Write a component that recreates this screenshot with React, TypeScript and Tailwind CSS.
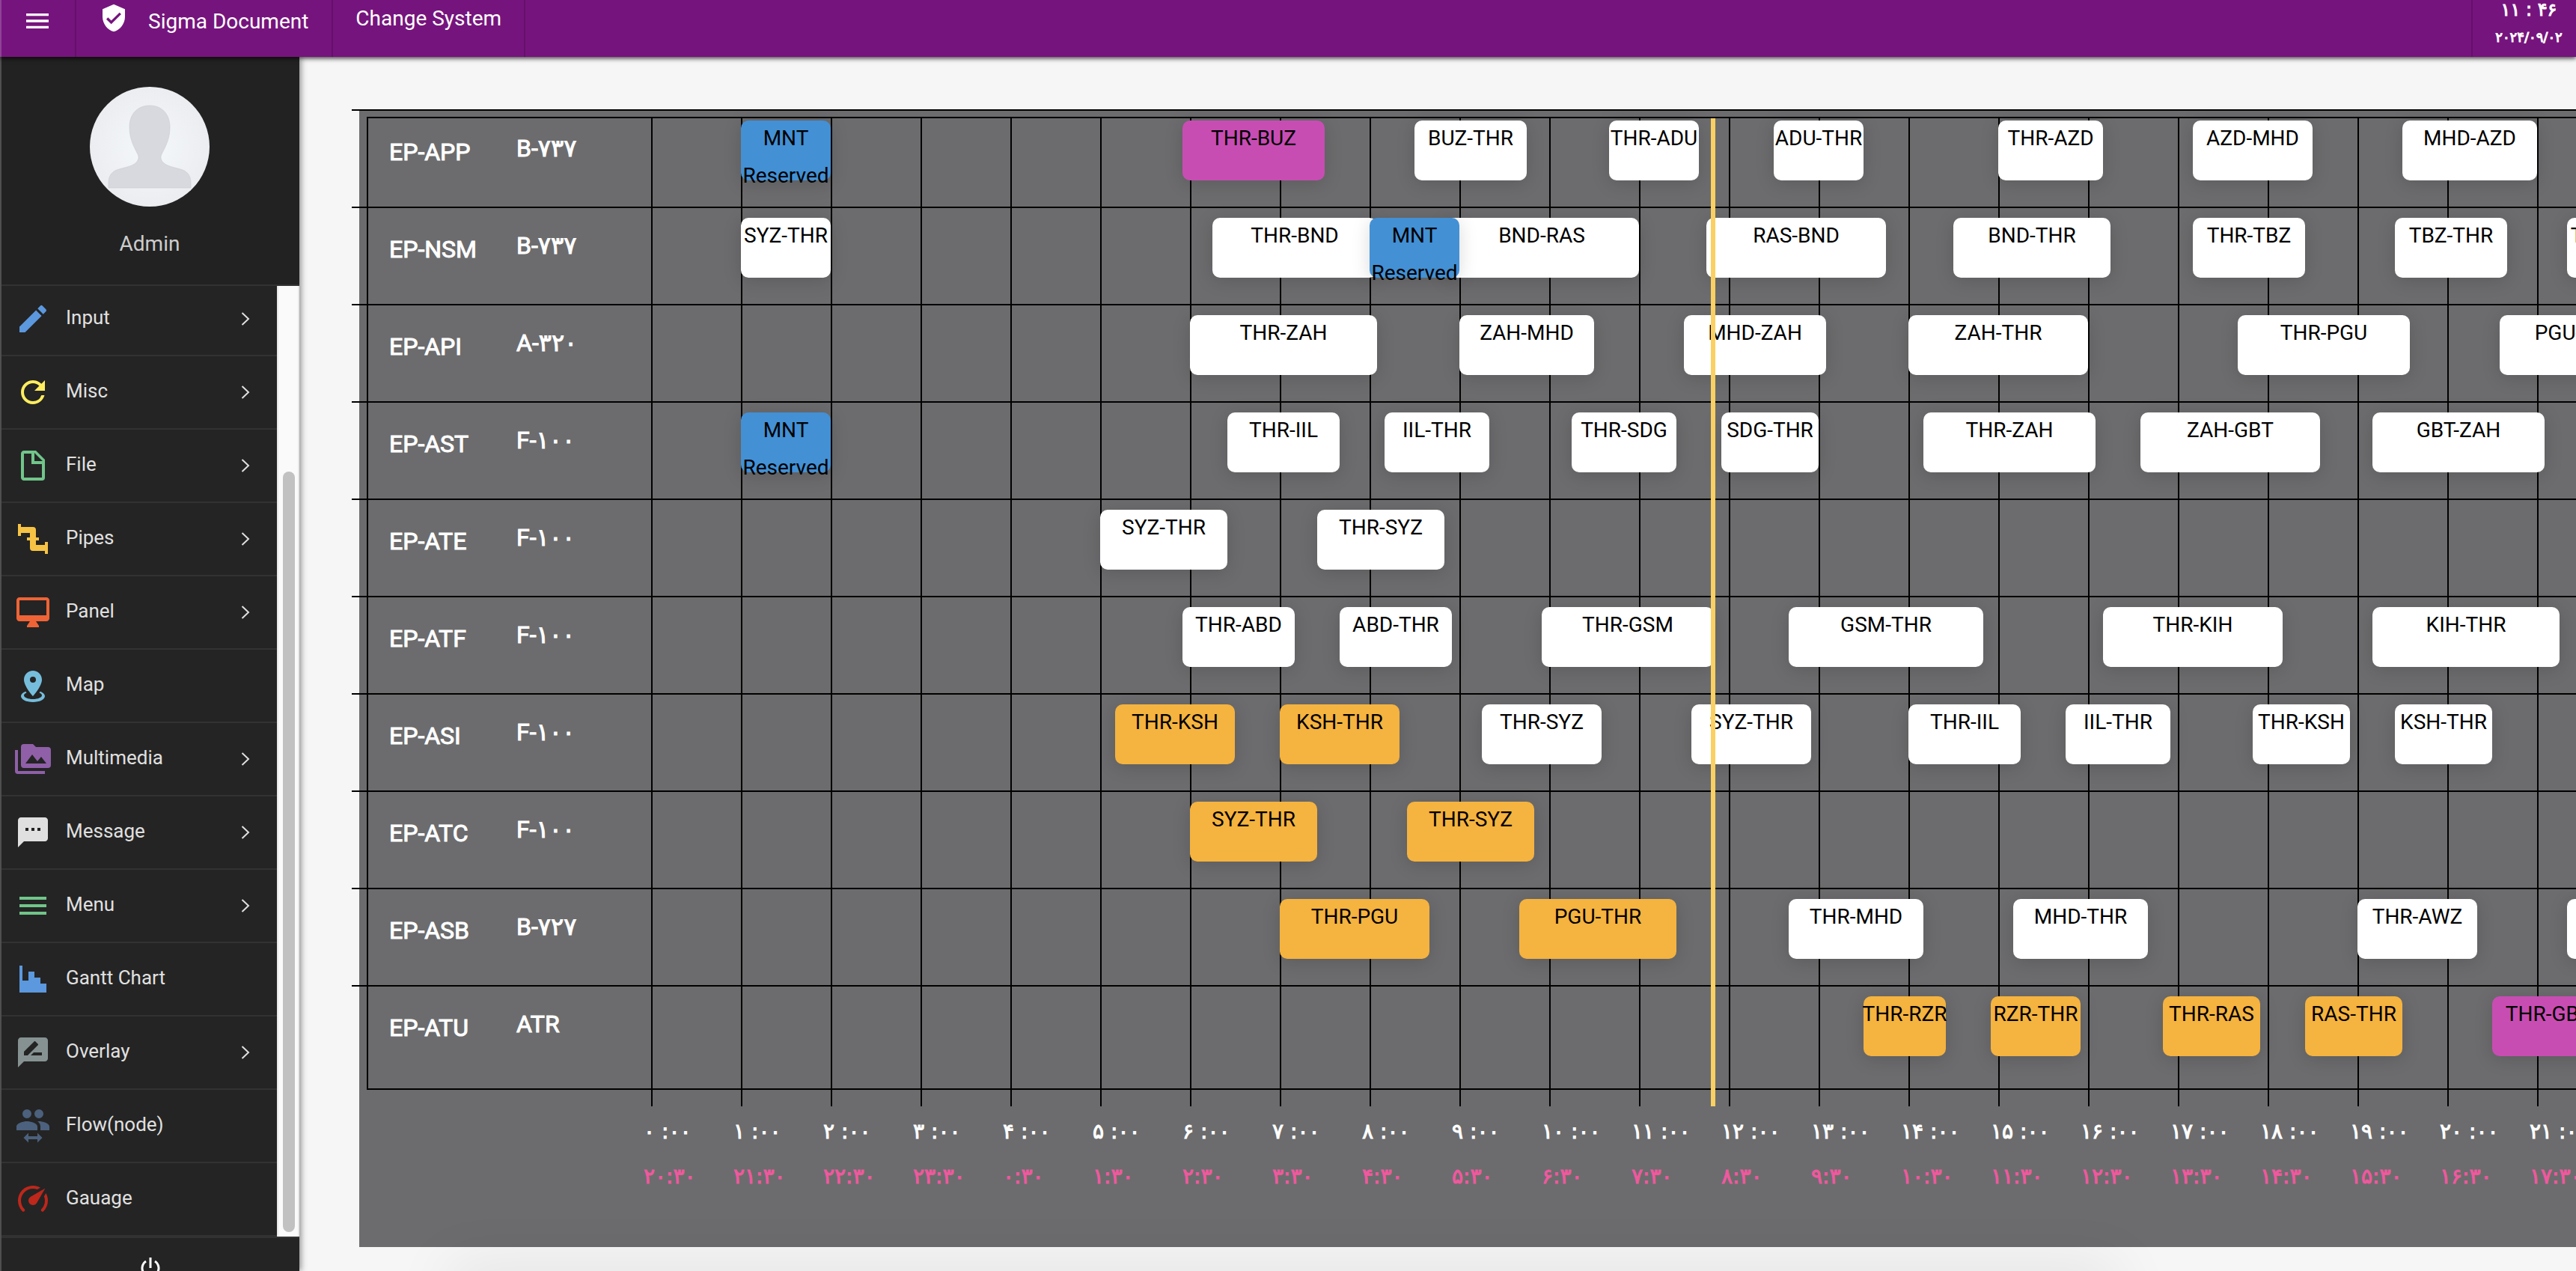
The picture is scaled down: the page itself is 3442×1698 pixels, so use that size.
import React from "react";
import { MdEdit, MdRefresh, MdVerifiedUser, MdTextsms, MdRateReview } from "react-icons/md";

type IconProps = { className?: string };

const glyph = (d: string) =>
  function Glyph({ className }: IconProps) {
    return (
      <svg viewBox="0 0 24 24" fill="currentColor" className={className} aria-hidden="true">
        <path fillRule="evenodd" d={d} />
      </svg>
    );
  };

const FileIcon = glyph(
  "M6,2H14L20,8V20A2,2 0 0,1 18,22H6C4.89,22 4,21.1 4,20V4C4,2.89 4.89,2 6,2M11,4H6V20H18V11H11V4M13,9H18.5L13,3.5V9Z",
);
const PipeIcon = glyph(
  "M22,14H20V16H14V13H16V11H14V6A2,2 0 0,0 12,4H4V2H2V10H4V8H10V11H8V13H10V18A2,2 0 0,0 12,20H20V22H22Z",
);
const DesktopIcon = glyph(
  "M21,2H3C1.9,2 1,2.9 1,4V16C1,17.1 1.9,18 3,18H10L8,21V22H16V21L14,18H21C22.1,18 23,17.1 23,16V4C23,2.9 22.1,2 21,2M21,14H3V4H21V14Z",
);
const MapIcon = glyph(
  "M12,2C15.31,2 18,4.66 18,7.95C18,12.41 12,19 12,19S6,12.41 6,7.95C6,4.66 8.69,2 12,2M12,6A2,2 0 0,0 10,8A2,2 0 0,0 12,10A2,2 0 0,0 14,8A2,2 0 0,0 12,6M20,19C20,21.21 16.42,23 12,23C7.58,23 4,21.21 4,19C4,17.71 5.22,16.56 7.11,15.83L7.75,16.74C6.67,17.19 6,17.81 6,18.5C6,19.88 8.69,21 12,21C15.31,21 18,19.88 18,18.5C18,17.81 17.33,17.19 16.25,16.74L16.89,15.83C18.78,16.56 20,17.71 20,19Z",
);
const MediaIcon = glyph(
  "M7,15L11.5,9L15,13.5L17.5,10.5L21,15M22,4H14L12,2H6A2,2 0 0,0 4,4V16A2,2 0 0,0 6,18H22A2,2 0 0,0 24,16V6A2,2 0 0,0 22,4M2,6H0V20A2,2 0 0,0 2,22H20V20H2V6Z",
);
const MenuIcon = glyph("M3,6H21V8H3V6M3,11H21V13H3V11M3,16H21V18H3V16Z");
const HistogramIcon = glyph("M3,3H5V13H9V7H13V11H17V15H21V21H3V3Z");
const SwitchIcon = glyph(
  "M16,9C18.33,9 23,10.17 23,12.5V15H17V12.5C17,11 16.19,9.89 15.04,9.05L16,9M8,9C10.33,9 15,10.17 15,12.5V15H1V12.5C1,10.17 5.67,9 8,9M8,7A3,3 0 0,1 5,4A3,3 0 0,1 8,1A3,3 0 0,1 11,4A3,3 0 0,1 8,7M16,7A3,3 0 0,1 13,4A3,3 0 0,1 16,1A3,3 0 0,1 19,4A3,3 0 0,1 16,7M9,16.75V19H15V16.75L18.25,20L15,23.25V21H9V23.25L5.75,20L9,16.75Z",
);
const GaugeIcon = glyph(
  "M12,16A3,3 0 0,1 9,13C9,11.88 9.61,10.9 10.5,10.39L20.21,4.77L14.68,14.35C14.18,15.33 13.17,16 12,16M12,3C13.81,3 15.5,3.5 16.97,4.32L14.87,5.53C14,5.19 13,5 12,5A8,8 0 0,0 4,13C4,15.21 4.89,17.21 6.34,18.65H6.35C6.74,19.04 6.74,19.67 6.35,20.06C5.96,20.45 5.32,20.45 4.93,20.07C3.12,18.26 2,15.76 2,13A10,10 0 0,1 12,3M22,13C22,15.76 20.88,18.26 19.07,20.07C18.68,20.45 18.05,20.45 17.66,20.06C17.27,19.67 17.27,19.04 17.66,18.65C19.11,17.2 20,15.21 20,13C20,12 19.81,11 19.46,10.1L20.67,8C21.5,9.5 22,11.18 22,13Z",
);

type MenuEntry = {
  label: string;
  icon: React.ComponentType<IconProps>;
  tone: string;
  children?: boolean;
};

const menu: MenuEntry[] = [
  { label: "Input", icon: MdEdit, tone: "text-[#5b98de]", children: true },
  { label: "Misc", icon: MdRefresh, tone: "text-[#ffed5f]", children: true },
  { label: "File", icon: FileIcon, tone: "text-[#71c58a]", children: true },
  { label: "Pipes", icon: PipeIcon, tone: "text-[#f6c344]", children: true },
  { label: "Panel", icon: DesktopIcon, tone: "text-[#ee6436]", children: true },
  { label: "Map", icon: MapIcon, tone: "text-[#76bddb]" },
  { label: "Multimedia", icon: MediaIcon, tone: "text-[#8f5fa8]", children: true },
  { label: "Message", icon: MdTextsms, tone: "text-[#e0e0e0]", children: true },
  { label: "Menu", icon: MenuIcon, tone: "text-[#71c58a]", children: true },
  { label: "Gantt Chart", icon: HistogramIcon, tone: "text-[#5b98de]" },
  { label: "Overlay", icon: MdRateReview, tone: "text-[#869292]", children: true },
  { label: "Flow(node)", icon: SwitchIcon, tone: "text-[#4b617d]" },
  { label: "Gauage", icon: GaugeIcon, tone: "text-[#be271b]" },
];

/* A flight is [route, start minute, end minute, kind]. */
type Kind = "plain" | "late" | "active" | "service";
type Flight = [string, number, number, Kind?];
type Aircraft = { tail: string; model: string; flights: Flight[] };

const fleet: Aircraft[] = [
  {
    tail: "EP-APP",
    model: "B-۷۳۷",
    flights: [
      ["MNT Reserved", 60, 120, "service"],
      ["THR-BUZ", 355, 450, "active"],
      ["BUZ-THR", 510, 585],
      ["THR-ADU", 640, 700],
      ["ADU-THR", 750, 810],
      ["THR-AZD", 900, 970],
      ["AZD-MHD", 1030, 1110],
      ["MHD-AZD", 1170, 1260],
    ],
  },
  {
    tail: "EP-NSM",
    model: "B-۷۳۷",
    flights: [
      ["SYZ-THR", 60, 120],
      ["THR-BND", 375, 485],
      ["BND-RAS", 530, 660],
      ["MNT Reserved", 480, 540, "service"],
      ["RAS-BND", 705, 825],
      ["BND-THR", 870, 975],
      ["THR-TBZ", 1030, 1105],
      ["TBZ-THR", 1165, 1240],
      ["THR-AWZ", 1280, 1345],
    ],
  },
  {
    tail: "EP-API",
    model: "A-۳۲۰",
    flights: [
      ["THR-ZAH", 360, 485],
      ["ZAH-MHD", 540, 630],
      ["MHD-ZAH", 690, 785],
      ["ZAH-THR", 840, 960],
      ["THR-PGU", 1060, 1175],
      ["PGU-THR", 1235, 1340],
    ],
  },
  {
    tail: "EP-AST",
    model: "F-۱۰۰",
    flights: [
      ["MNT Reserved", 60, 120, "service"],
      ["THR-IIL", 385, 460],
      ["IIL-THR", 490, 560],
      ["THR-SDG", 615, 685],
      ["SDG-THR", 715, 780],
      ["THR-ZAH", 850, 965],
      ["ZAH-GBT", 995, 1115],
      ["GBT-ZAH", 1150, 1265],
    ],
  },
  {
    tail: "EP-ATE",
    model: "F-۱۰۰",
    flights: [
      ["SYZ-THR", 300, 385],
      ["THR-SYZ", 445, 530],
    ],
  },
  {
    tail: "EP-ATF",
    model: "F-۱۰۰",
    flights: [
      ["THR-ABD", 355, 430],
      ["ABD-THR", 460, 535],
      ["THR-GSM", 595, 710],
      ["GSM-THR", 760, 890],
      ["THR-KIH", 970, 1090],
      ["KIH-THR", 1150, 1275],
    ],
  },
  {
    tail: "EP-ASI",
    model: "F-۱۰۰",
    flights: [
      ["THR-KSH", 310, 390, "late"],
      ["KSH-THR", 420, 500, "late"],
      ["THR-SYZ", 555, 635],
      ["SYZ-THR", 695, 775],
      ["THR-IIL", 840, 915],
      ["IIL-THR", 945, 1015],
      ["THR-KSH", 1070, 1135],
      ["KSH-THR", 1165, 1230],
    ],
  },
  {
    tail: "EP-ATC",
    model: "F-۱۰۰",
    flights: [
      ["SYZ-THR", 360, 445, "late"],
      ["THR-SYZ", 505, 590, "late"],
    ],
  },
  {
    tail: "EP-ASB",
    model: "B-۷۲۷",
    flights: [
      ["THR-PGU", 420, 520, "late"],
      ["PGU-THR", 580, 685, "late"],
      ["THR-MHD", 760, 850],
      ["MHD-THR", 910, 1000],
      ["THR-AWZ", 1140, 1220],
      ["", 1280, 1360],
    ],
  },
  {
    tail: "EP-ATU",
    model: "ATR",
    flights: [
      ["THR-RZR", 810, 865, "late"],
      ["RZR-THR", 895, 955, "late"],
      ["THR-RAS", 1010, 1075, "late"],
      ["RAS-THR", 1105, 1170, "late"],
      ["THR-GBT", 1230, 1305, "active"],
    ],
  },
];

const kindTone: Record<Kind, string> = {
  plain: "bg-white",
  late: "bg-[#f5b33f]",
  active: "bg-[#c84db3]",
  service: "bg-[#4390d5]",
};

const PX_PER_MINUTE = 2;
const NOW = 709;
const hours = Array.from({ length: 22 }, (_, h) => h);
const persian = (n: number) => String(n).replace(/\d/g, (d) => "۰۱۲۳۴۵۶۷۸۹"[Number(d)]);

function Header() {
  return (
    <header className="relative z-20 flex h-[76px] shrink-0 items-stretch border-l-2 border-[#8f4395] bg-[#76147d] text-[28px] leading-8 text-white shadow-[0_2px_6px_rgba(0,0,0,0.75)]">
      <button type="button" aria-label="Toggle menu" className="flex w-[100px] justify-center border-r-2 border-[#63106b] pt-2 pr-0.5">
        <MenuIcon className="size-10" />
      </button>
      <a href="#document" className="flex items-start gap-[26px] border-r-2 border-[#63106b] pt-1 pr-[31px] pl-[30px]">
        <MdVerifiedUser className="size-10" />
        <span className="pt-[9px]">Sigma Document</span>
      </a>
      <a href="#system" className="border-r-2 border-[#63106b] px-[30px] pt-[9px]">
        Change System
      </a>
      <div className="ml-auto flex w-[140px] flex-col items-center border-l-2 border-[#63106b] pl-3 font-['DejaVu_Sans',sans-serif] [-webkit-text-stroke:1px_currentColor]">
        <time className="text-2xl leading-[26px]">۱۱ : ۴۶</time>
        <time className="pt-2 text-lg leading-8">۲۰۲۴/۰۹/۰۲</time>
      </div>
    </header>
  );
}

function Avatar() {
  return (
    <svg viewBox="0 0 160 160" className="size-40 rounded-full" role="img" aria-label="Admin">
      <defs>
        <radialGradient id="avatar-glow">
          <stop offset="0" stopColor="#f5f8fb" />
          <stop offset="1" stopColor="#ebedf1" />
        </radialGradient>
      </defs>
      <rect width="160" height="160" fill="url(#avatar-glow)" />
      <path
        d="M80 25C96 25 107 36 107 54C107 70 101 80 96 90C94 94 95 98 98 101C104 107 116 108 124 111C132 114 135 121 135 128V135H25V128C25 121 28 114 36 111C44 108 56 107 62 101C65 98 66 94 64 90C59 80 53 70 53 54C53 36 64 25 80 25Z"
        fill="#d7d9de"
        stroke="#c9cbd0"
        strokeWidth="0.6"
      />
    </svg>
  );
}

function Sidebar() {
  return (
    <aside className="relative z-10 flex w-[400px] shrink-0 flex-col border-l-2 border-[#4f4f4f] bg-[#242424] text-[#e0e0e0] shadow-[2px_0_8px_rgba(0,0,0,0.45)]">
      <div className="flex h-[306px] shrink-0 flex-col items-center border-b-2 border-[#323232] bg-[#222222] pt-10 pr-0.5">
        <Avatar />
        <p className="pt-8 text-[28px] leading-9 text-[#cccccc]">Admin</p>
      </div>
      <div className="flex h-[1270px] shrink-0">
        <nav className="flex-1 overflow-hidden">
          <ul className="-mt-1">
            {menu.map(({ label, icon: Icon, tone, children }) => (
              <li key={label} className="h-[98px] border-b-2 border-[#323232]">
                <button type="button" className="flex h-full w-full items-center pl-[18px] text-left">
                  <Icon className={`size-12 ${tone}`} />
                  <span className="ml-5 flex-1 pb-1 text-[26px] leading-8">{label}</span>
                  {children && (
                    <svg viewBox="0 0 12 20" className="mr-[36px] h-5 w-3" fill="none" stroke="currentColor" strokeWidth="2">
                      <path d="M1.5 2L10 10L1.5 18" />
                    </svg>
                  )}
                </button>
              </li>
            ))}
          </ul>
        </nav>
        <div className="flex w-[30px] flex-col justify-end border-x-2 border-[#e8e8e8] bg-[#fafafa] pb-[6px] pl-1.5">
          <div className="h-[1016px] w-4 rounded-full bg-[#c1c1c1]" />
        </div>
      </div>
      <div className="flex flex-1 justify-center overflow-hidden border-t-2 border-[#323232] pt-6">
        <button type="button" aria-label="Log out" className="size-8 text-white">
          <svg viewBox="0 0 32 32" className="size-8" fill="none" stroke="currentColor" strokeWidth="3">
            <path d="M16 2V16M10 7A11 11 0 1 0 22 7" />
          </svg>
        </button>
      </div>
    </aside>
  );
}

function FlightBar({ flight }: { flight: Flight }) {
  const [route, start, end, kind = "plain"] = flight;
  return (
    <button
      type="button"
      aria-label={route || "Flight"}
      className={`absolute top-[13px] h-20 rounded-[10px] text-center text-[28px] leading-[50px] text-black shadow-[0_4px_24px_rgba(0,0,0,0.15)] ${kindTone[kind]}`}
      style={{ left: start * PX_PER_MINUTE, width: (end - start) * PX_PER_MINUTE }}
    >
      <span className="-mx-4 -mt-0.5 flex h-full flex-col items-center whitespace-pre">
        {route.split(" ").map((word) => (
          <span key={word}>{word}</span>
        ))}
      </span>
    </button>
  );
}

function Gantt() {
  return (
    <section className="relative ml-20 bg-[#6c6c6e] pb-[64px]">
      {/* Frame and hour grid behind the rows */}
      <div className="absolute top-[10px] right-0 left-[10px] h-[1300px] border-2 border-r-0 border-black" />
      <div className="absolute top-3 right-0 left-[390px] flex h-[1320px]">
        {hours.map((h) => (
          <div key={h} className="w-[120px] shrink-0 border-l-2 border-black" />
        ))}
      </div>

      <div className="relative">
        {fleet.map((craft) => (
          <div key={craft.tail} className="-ml-[10px] flex h-[130px] border-t-2 border-black pl-[50px] text-white">
            <div className="w-[170px] pt-[33px] text-[32px] leading-[44px] [-webkit-text-stroke:1px_currentColor]">
              {craft.tail}
            </div>
            <div className="w-[180px] pt-[28px] text-[32px] leading-[44px] [-webkit-text-stroke:1px_currentColor]">
              {craft.model}
            </div>
            <div className="relative flex-1">
              {craft.flights.map((f) => (
                <FlightBar key={`${f[0]}${f[1]}`} flight={f} />
              ))}
            </div>
          </div>
        ))}
      </div>

      <div className="absolute top-3 left-[390px] h-[1320px]">
        <div className="h-full w-1.5 bg-[#fbd062]" style={{ marginLeft: NOW * PX_PER_MINUTE - 2 }} />
      </div>

      <div className="ml-[380px] flex pt-9 font-['DejaVu_Sans',sans-serif] text-[28px] leading-[60px] [-webkit-text-stroke:1px_currentColor]">
        {hours.map((h) => (
          <div key={h} className="flex w-[120px] shrink-0 flex-col">
            <span className="text-white">{persian(h)} :۰۰</span>
            <span className="text-[#f0589e]">{persian((h + 20) % 24)}:۳۰</span>
          </div>
        ))}
      </div>
    </section>
  );
}

export default function App() {
  return (
    <div className="flex h-screen flex-col overflow-hidden bg-[#f6f6f6] font-[Roboto,'DejaVu_Sans',sans-serif]">
      <Header />
      <div className="flex min-h-0 flex-1">
        <Sidebar />
        <main className="relative min-w-0 flex-1 overflow-hidden pt-[70px]">
          <Gantt />
          <div className="absolute -bottom-10 left-[200px] h-10 w-[2230px] shadow-[0_0_80px_rgba(0,0,0,0.12)]" />
        </main>
      </div>
    </div>
  );
}
